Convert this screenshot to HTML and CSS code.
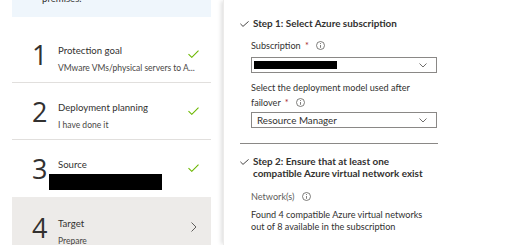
FILE: index.html
```html
<!DOCTYPE html>
<html lang="en">
<head>
    <meta charset="UTF-8">
    <title>Prepare infrastructure</title>
    <link rel="stylesheet" href="styles.css">
</head>
<body>
    <div class="page">
        <!-- Wizard steps -->
        <aside class="wizard">
            <div class="notice">premises.</div>
            <ol class="steps">
                <li class="step">
                    <span class="step-num">1</span>
                    <div class="step-body">
                        <div class="step-title">Protection goal</div>
                        <div class="step-sub">VMware VMs/physical servers to A...</div>
                    </div>
                    <svg class="step-check" width="11" height="8" viewBox="0 0 11 8"><polyline points="0.5,4.2 3.8,7.3 10.5,0.6" fill="none" stroke="#6bb700" stroke-width="1.1"/></svg>
                </li>
                <li class="step">
                    <span class="step-num">2</span>
                    <div class="step-body">
                        <div class="step-title">Deployment planning</div>
                        <div class="step-sub">I have done it</div>
                    </div>
                    <svg class="step-check" width="11" height="8" viewBox="0 0 11 8"><polyline points="0.5,4.2 3.8,7.3 10.5,0.6" fill="none" stroke="#6bb700" stroke-width="1.1"/></svg>
                </li>
                <li class="step step-last">
                    <span class="step-num">3</span>
                    <div class="step-body">
                        <div class="step-title">Source</div>
                        <div class="redacted step-redacted"></div>
                    </div>
                    <svg class="step-check" width="11" height="8" viewBox="0 0 11 8"><polyline points="0.5,4.2 3.8,7.3 10.5,0.6" fill="none" stroke="#6bb700" stroke-width="1.1"/></svg>
                </li>
                <li class="step step-active">
                    <span class="step-num">4</span>
                    <div class="step-body">
                        <div class="step-title">Target</div>
                        <div class="step-sub">Prepare</div>
                    </div>
                    <svg class="step-chevron" width="6" height="10" viewBox="0 0 6 10"><polyline points="0.5,0.5 5,5 0.5,9.5" fill="none" stroke="#605e5c" stroke-width="1"/></svg>
                </li>
            </ol>
        </aside>

        <!-- Step detail -->
        <main class="detail">
            <section class="section">
                <h2 class="section-head">
                    <svg class="head-check" width="9" height="6" viewBox="0 0 9 6"><polyline points="0.4,2.8 3,5.4 8.6,0.4" fill="none" stroke="#323130" stroke-width="0.9"/></svg>
                    <span>Step 1: Select Azure subscription</span>
                </h2>
                <div class="field">
                    <label class="field-label label-first">Subscription <span class="req">*</span>
                        <svg class="info" width="9" height="9" viewBox="0 0 9 9"><circle cx="4.5" cy="4.5" r="4" fill="none" stroke="#605e5c" stroke-width="0.8"/><line x1="4.5" y1="4" x2="4.5" y2="6.8" stroke="#605e5c" stroke-width="0.8"/><circle cx="4.5" cy="2.6" r="0.5" fill="#605e5c"/></svg>
                    </label>
                    <div class="dropdown">
                        <span class="redacted dropdown-redacted"></span>
                        <svg class="caret" width="8" height="5" viewBox="0 0 8 5"><polyline points="0.5,0.5 4,4 7.5,0.5" fill="none" stroke="#605e5c" stroke-width="0.9"/></svg>
                    </div>
                </div>
                <div class="field">
                    <label class="field-label label-wrap">Select the deployment model used after failover <span class="req">*</span>
                        <svg class="info" width="9" height="9" viewBox="0 0 9 9"><circle cx="4.5" cy="4.5" r="4" fill="none" stroke="#605e5c" stroke-width="0.8"/><line x1="4.5" y1="4" x2="4.5" y2="6.8" stroke="#605e5c" stroke-width="0.8"/><circle cx="4.5" cy="2.6" r="0.5" fill="#605e5c"/></svg>
                    </label>
                    <div class="dropdown dropdown-second">
                        <span class="dropdown-value">Resource Manager</span>
                        <svg class="caret" width="8" height="5" viewBox="0 0 8 5"><polyline points="0.5,0.5 4,4 7.5,0.5" fill="none" stroke="#605e5c" stroke-width="0.9"/></svg>
                    </div>
                </div>
            </section>

            <hr class="divider">

            <section class="section section-second">
                <h2 class="section-head head-wrap">
                    <svg class="head-check" width="9" height="6" viewBox="0 0 9 6"><polyline points="0.4,2.8 3,5.4 8.6,0.4" fill="none" stroke="#323130" stroke-width="0.9"/></svg>
                    <span>Step 2: Ensure that at least one compatible Azure virtual network exist</span>
                </h2>
                <div class="field">
                    <div class="field-label label-muted">Network(s)
                        <svg class="info" width="9" height="9" viewBox="0 0 9 9"><circle cx="4.5" cy="4.5" r="4" fill="none" stroke="#605e5c" stroke-width="0.8"/><line x1="4.5" y1="4" x2="4.5" y2="6.8" stroke="#605e5c" stroke-width="0.8"/><circle cx="4.5" cy="2.6" r="0.5" fill="#605e5c"/></svg>
                    </div>
                    <p class="field-text">Found 4 compatible Azure virtual networks out of 8 available in the subscription</p>
                </div>
            </section>
        </main>
    </div>
</body>
</html>
```

FILE: styles.css
```css
* {
    box-sizing: border-box;
}

body {
    margin: 0;
    height: 245px;
    overflow: hidden;
    background-color: #ffffff;
    font-family: 'Lato', 'Liberation Sans', sans-serif;
    font-size: 9.1px;
    color: #323130;
}

.page {
    display: flex;
    height: 245px;
}

/* Left wizard */
.wizard {
    width: 223px;
    flex-shrink: 0;
    padding: 0 12px;
}

.notice {
    margin-top: -8px;
    padding: 0 0 11px 30px;
    font-size: 9.6px;
    line-height: 14px;
    background-color: #eff6fc;
}

.steps {
    list-style: none;
    margin: 9px 0 0;
    padding: 0;
}

.step {
    display: grid;
    grid-template-columns: 26px minmax(0, 1fr) auto;
    align-items: start;
    height: 57px;
    padding: 18px 12px 0 20px;
    border-bottom: 1px solid #e1dfdd;
}

.step-last {
    border-bottom: none;
}

.step-active {
    height: 60px;
    padding-top: 20px;
    background-color: #edebe9;
    border-bottom: none;
}

.step-num {
    margin-top: -3px;
    font-family: 'Open Sans', sans-serif;
    font-size: 27px;
    line-height: 27px;
    color: #323130;
}

.step-title {
    font-size: 9.6px;
    line-height: 14px;
}

.step-sub {
    margin-top: 3px;
    font-size: 8.5px;
    line-height: 14px;
    color: #484644;
    white-space: nowrap;
}

.step-check {
    margin-top: 6px;
}

.step-chevron {
    margin-top: 5px;
    margin-right: 2px;
}

.redacted {
    display: block;
    background-color: #000000;
}

.step-redacted {
    width: 113px;
    height: 16px;
    margin: 2px 0 0 -9px;
}

/* Right detail pane */
.detail {
    flex: 1;
    padding-top: 16px;
    border-left: 1px solid #ecebea;
    box-shadow: -3px 0 4px -1px rgba(0, 0, 0, 0.12);
}

.section-head {
    display: flex;
    align-items: baseline;
    margin: 0 0 0 16px;
    font-size: 9.9px;
    font-weight: 700;
    line-height: 14px;
}

.head-check {
    flex-shrink: 0;
    margin-right: 4px;
}

.head-wrap {
    width: 200px;
    line-height: 12px;
}

.field {
    margin-left: 27px;
    width: 186px;
}

.field-label {
    display: block;
    line-height: 14px;
}

.label-first {
    margin-top: 9px;
}

.label-wrap {
    margin-top: 7px;
    line-height: 15px;
    width: 172px;
}

.label-muted {
    margin-top: 11px;
    color: #605e5c;
}

.req {
    margin-left: 2px;
    color: #a4262c;
}

.info {
    margin-left: 5px;
    vertical-align: -1px;
}

.dropdown {
    display: flex;
    align-items: center;
    justify-content: space-between;
    height: 16px;
    margin-top: 4px;
    padding: 0 9px 0 2px;
    border: 1px solid #8a8886;
}

.dropdown-second {
    margin-top: 2px;
    padding-left: 5px;
}

.dropdown-redacted {
    width: 83px;
    height: 8px;
}

.dropdown-value {
    font-size: 9.8px;
    line-height: 14px;
}

.divider {
    width: 198px;
    margin: 15px 0 0 16px;
    border: none;
    border-top: 1px solid #8a8886;
}

.section-second {
    margin-top: 11px;
}

.field-text {
    width: 180px;
    margin: 5px 0 0;
    line-height: 12px;
}
```
